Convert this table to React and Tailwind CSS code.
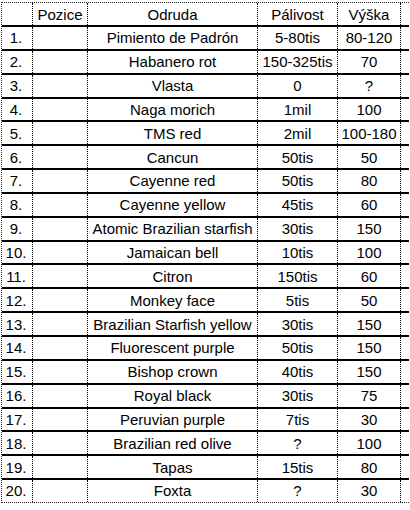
const rows = [
  ["1.", "Pimiento de Padrón", "5-80tis", "80-120"],
  ["2.", "Habanero rot", "150-325tis", "70"],
  ["3.", "Vlasta", "0", "?"],
  ["4.", "Naga morich", "1mil", "100"],
  ["5.", "TMS red", "2mil", "100-180"],
  ["6.", "Cancun", "50tis", "50"],
  ["7.", "Cayenne red", "50tis", "80"],
  ["8.", "Cayenne yellow", "45tis", "60"],
  ["9.", "Atomic Brazilian starfish", "30tis", "150"],
  ["10.", "Jamaican bell", "10tis", "100"],
  ["11.", "Citron", "150tis", "60"],
  ["12.", "Monkey face", "5tis", "50"],
  ["13.", "Brazilian Starfish yellow", "30tis", "150"],
  ["14.", "Fluorescent purple", "50tis", "150"],
  ["15.", "Bishop crown", "40tis", "150"],
  ["16.", "Royal black", "30tis", "75"],
  ["17.", "Peruvian purple", "7tis", "30"],
  ["18.", "Brazilian red olive", "?", "100"],
  ["19.", "Tapas", "15tis", "80"],
  ["20.", "Foxta", "?", "30"],
];

const cell = "flex h-full items-center justify-center border-r border-dotted border-black";

function Row({ cells, header }) {
  return (
    <div
      className={`flex ${
        header ? "h-[22px]" : "h-[23.85px] border-t-2 border-black"
      }`}
    >
      <div className={`${cell} w-[31px] pr-[2px]`}>{cells[0]}</div>
      <div className={`${cell} w-[55px]`}>{header ? "Pozice" : ""}</div>
      <div className={`${cell} w-[170px]`}>{cells[1]}</div>
      <div className={`${cell} w-[80px]`}>{cells[2]}</div>
      <div className={`${cell} w-[63px]`}>{cells[3]}</div>
      <div className="flex-1" />
    </div>
  );
}

export default function App() {
  return (
    <div className="h-[510px] w-[410px] bg-white pt-[2px] pl-[1px]">
      <div
        className="w-[408px] border-y border-l border-dotted border-[#222] font-['Liberation_Sans',Arial,sans-serif] text-[15px] leading-none text-black"
      >
        <Row header cells={["", "Odruda", "Pálivost", "Výška"]} />
        {rows.map((r) => (
          <Row key={r[0]} cells={r} />
        ))}
      </div>
    </div>
  );
}
